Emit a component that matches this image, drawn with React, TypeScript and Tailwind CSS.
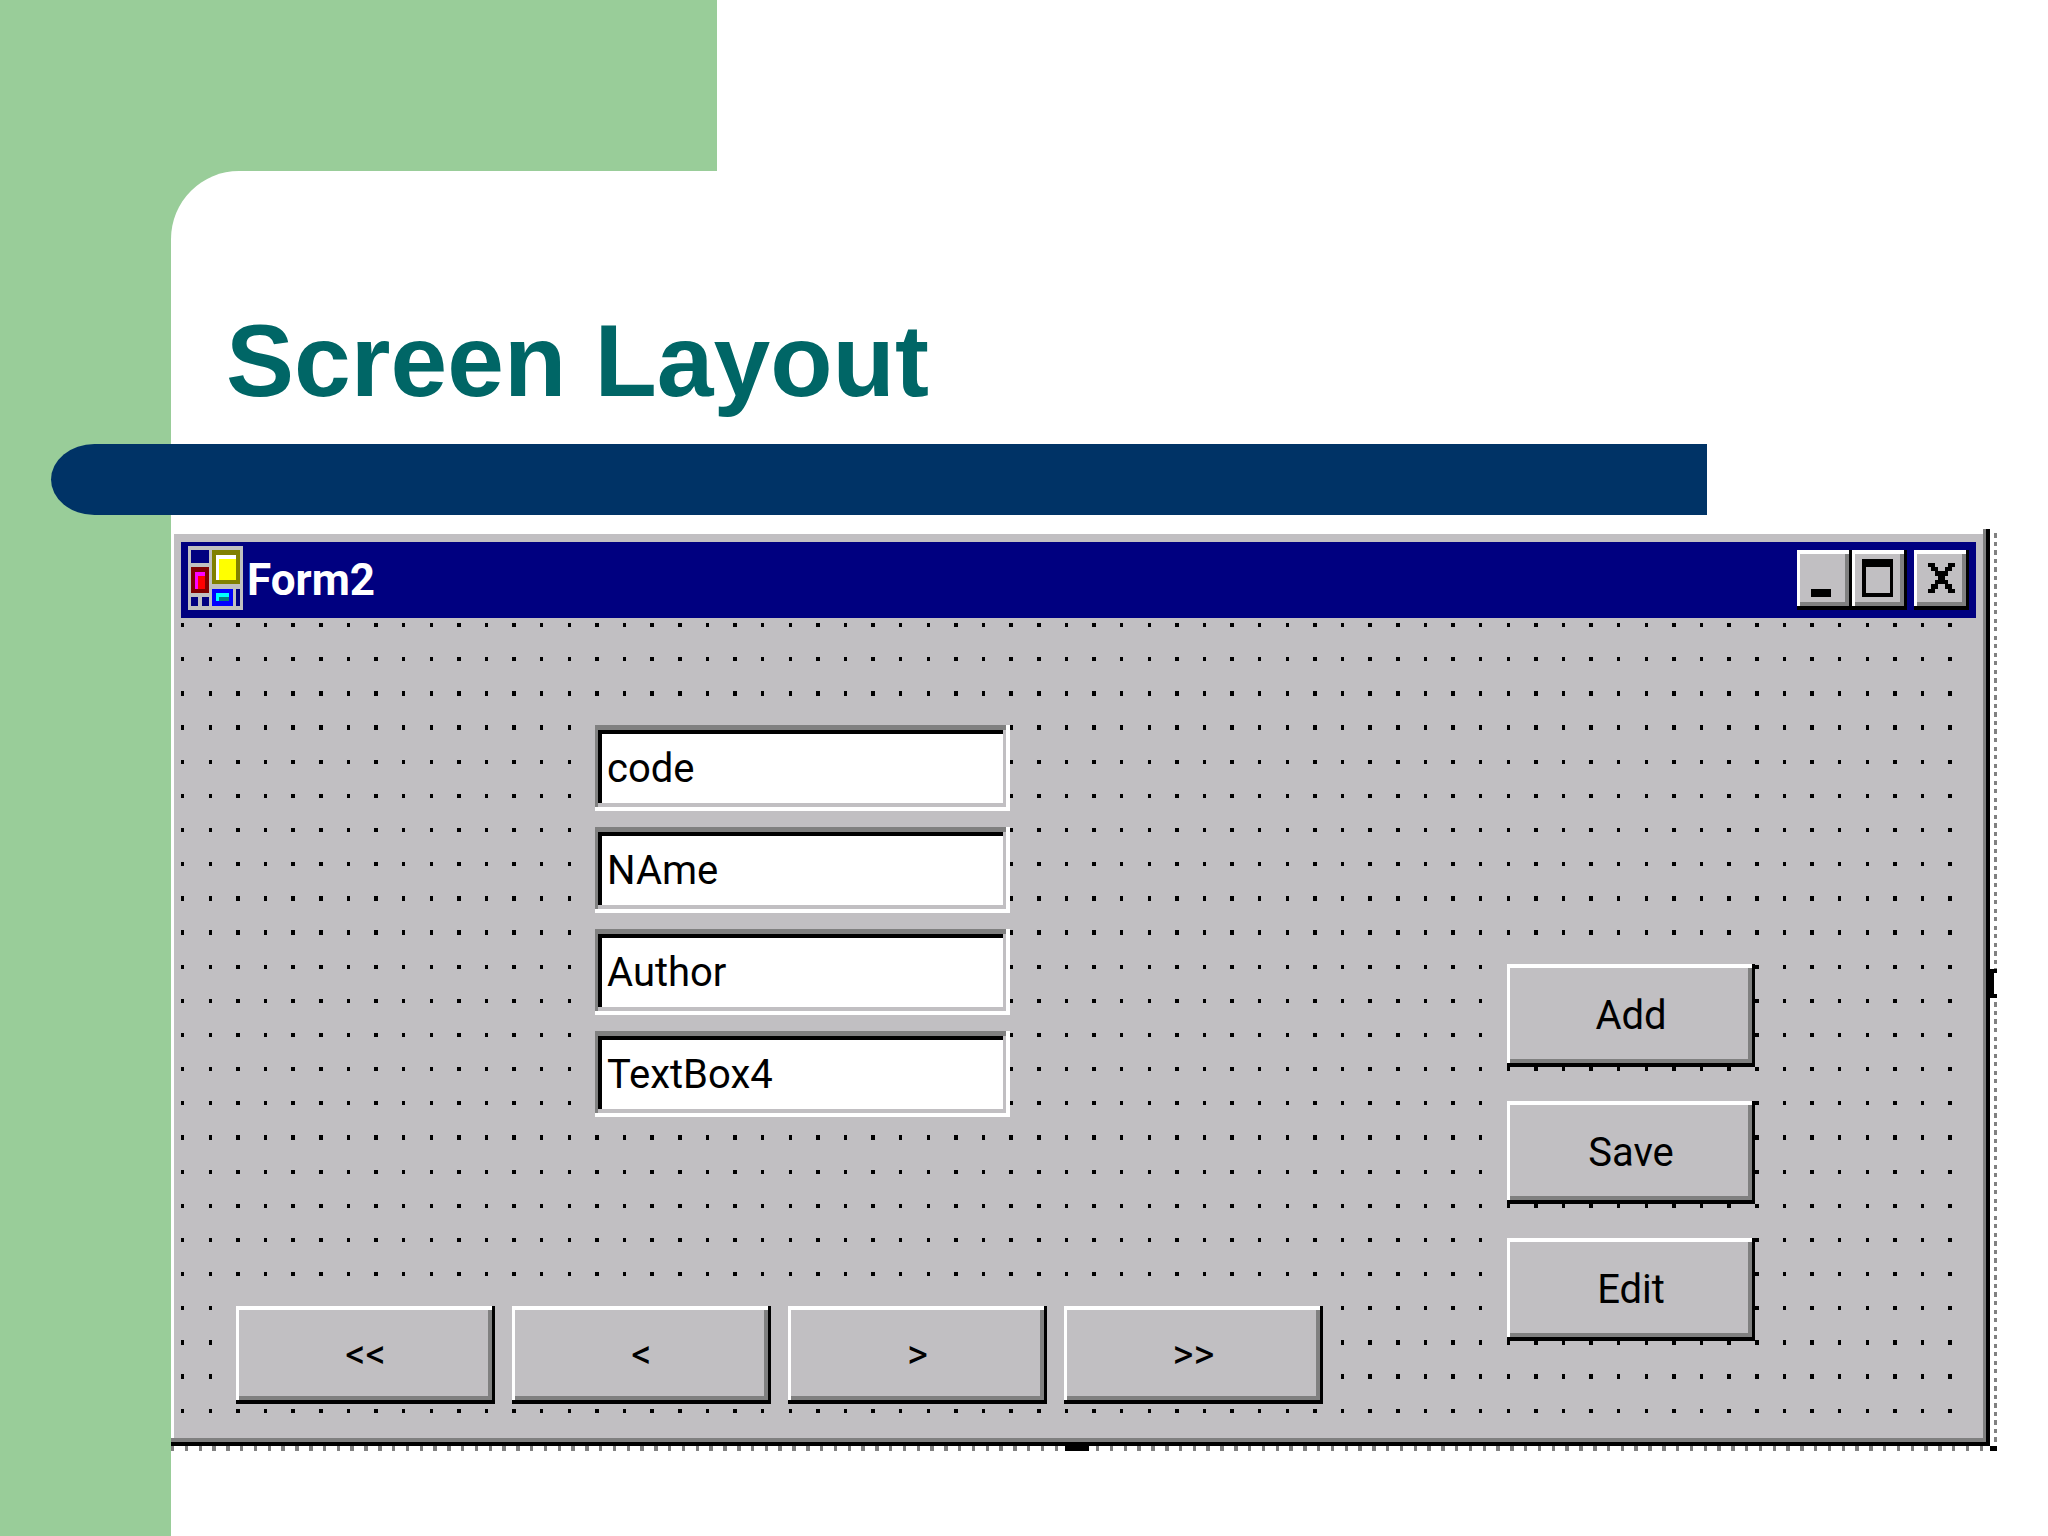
const fields = [
  { id: 'code', label: 'Code', value: 'code' },
  { id: 'name', label: 'Name', value: 'NAme' },
  { id: 'author', label: 'Author', value: 'Author' },
  { id: 'textbox4', label: 'TextBox4', value: 'TextBox4' },
];

const navigation = [
  { label: '<<', title: 'First record' },
  { label: '<', title: 'Previous record' },
  { label: '>', title: 'Next record' },
  { label: '>>', title: 'Last record' },
];

const actions = ['Add', 'Save', 'Edit'];

const raised = 'bg-[#c1bfc2] shadow-[inset_-3px_-4px_0_#000,inset_3px_4px_0_#fff,inset_-7px_-8px_0_#808080]';
const sunken =
  'bg-white shadow-[inset_-4px_-4px_0_#fff,inset_3px_5px_0_#808080,inset_-7px_-8px_0_#c1bfc2,inset_7px_9px_0_#000]';

function FormIcon() {
  return (
    <svg
      viewBox="0 0 16 15"
      preserveAspectRatio="none"
      shapeRendering="crispEdges"
      className="mt-1 h-16 w-[55px] shrink-0 self-start"
    >
      <rect width="16" height="15" fill="#c0c0c0" />
      <path d="M1 1h5v3h-5zM1 12h2v2h-2zM4 12h2v2h-2zM14 10h1v4h-1z" fill="#000080" />
      <rect x="1" y="5" width="5" height="6" fill="#800000" />
      <rect x="2" y="6" width="3" height="4" fill="#ff00ff" />
      <rect x="3" y="7" width="2" height="3" fill="#ff0000" />
      <rect x="7" y="1" width="8" height="8" fill="#808000" />
      <rect x="8" y="2" width="6" height="6" fill="#ffffff" />
      <rect x="9" y="3" width="5" height="5" fill="#ffff00" />
      <rect x="7" y="10" width="6" height="4" fill="#0000ff" />
      <rect x="8" y="11" width="4" height="2" fill="#00ffff" />
      <rect x="9" y="12" width="3" height="1" fill="#008080" />
    </svg>
  );
}

function CaptionButton({ label, path }: { label: string; path: string }) {
  return (
    <button type="button" aria-label={label} className={`h-[60px] w-[55px] ${raised}`}>
      <svg viewBox="0 0 16 14" preserveAspectRatio="none" shapeRendering="crispEdges" className="h-full w-full">
        <path d={path} fill="#000" fillRule="evenodd" />
      </svg>
    </button>
  );
}

function TitleBar() {
  return (
    <div className="flex h-[76px] items-center bg-[#000080] px-[7px]">
      <FormIcon />
      <h2 className="ml-1 flex-1 text-[44px] leading-[64px] font-bold text-white">Form2</h2>
      <CaptionButton label="Minimize" path="M4 9h6v2h-6z" />
      <CaptionButton label="Maximize" path="M3 2h9v9h-9zM4 4v6h7v-6z" />
      <div className="ml-[7px] flex">
        <CaptionButton
          label="Close"
          path="M4 3h2v1h1v1h2v-1h1v-1h2v1h-1v1h-1v1h-1v1h1v1h1v1h1v1h-2v-1h-1v-1h-2v1h-1v1h-2v-1h1v-1h1v-1h1v-1h-1v-1h-1v-1h-1z"
        />
      </div>
    </div>
  );
}

// Snap grid: one dot every 8 units
function DesignGrid() {
  const rows = Array.from({ length: 24 }, (_, i) => i * 8);
  return (
    <svg
      viewBox="0 0 520 189"
      preserveAspectRatio="none"
      shapeRendering="crispEdges"
      className="absolute inset-0 h-full w-full"
    >
      {rows.map((y) => (
        <line key={y} x1="0" x2="514" y1={y + 0.5} y2={y + 0.5} stroke="#000" strokeDasharray="1 7" />
      ))}
    </svg>
  );
}

function DesignerForm() {
  return (
    <div className="bg-[#c1bfc2] pt-[13px] pr-[14px] pb-4 pl-[10px] font-['Roboto','Liberation_Sans',sans-serif] shadow-[inset_-4px_-4px_0_#000,inset_-7px_-8px_0_#808080,inset_3px_5px_0_#fff]">
      <TitleBar />
      <form className="relative mt-[5px] flex min-h-[807px] text-[40px] leading-[52px] text-black">
        <DesignGrid />
        <div className="relative flex-1 pt-[102px]">
          <div className="ml-[414px] flex w-[415px] flex-col gap-4">
            {fields.map((field) => (
              <input
                key={field.id}
                id={field.id}
                aria-label={field.label}
                defaultValue={field.value}
                className={`h-[86px] w-full px-3 outline-none ${sunken}`}
              />
            ))}
          </div>
          <div className="mt-[189px] ml-[55px] flex gap-[17px]">
            {navigation.map((item) => (
              <button key={item.label} type="button" title={item.title} className={`h-[98px] w-[259px] ${raised}`}>
                {item.label}
              </button>
            ))}
          </div>
        </div>
        <div className="relative mr-[221px] flex w-[248px] flex-col gap-[34px] pt-[341px]">
          {actions.map((action) => (
            <button key={action} type="button" className={`h-[103px] ${raised}`}>
              {action}
            </button>
          ))}
        </div>
      </form>
    </div>
  );
}

export default function App() {
  return (
    <div className="flex min-h-screen flex-col bg-[#99cd99]">
      <div className="flex h-[171px]">
        <div className="w-[35%]" />
        <div className="flex-1 bg-white" />
      </div>
      <main className="ml-[171px] flex-1 rounded-tl-[68px] bg-white pt-[130px]">
        <h1 className="ml-[55px] font-['Liberation_Sans',sans-serif] text-[102px] leading-[120px] font-bold text-[#006666]">
          Screen Layout
        </h1>
        <div className="mt-[23px] mr-[341px] -ml-[120px] h-[71px] bg-[#003366] [border-radius:44px_0_0_44px/36px_0_0_36px]" />

        {/* Selected form with its dotted frame and resize handles */}
        <div className="mt-[14px] mr-[51px] grid grid-cols-[1fr_7px] grid-rows-[auto_5px]">
          <DesignerForm />
          <div className="relative">
            <svg
              viewBox="0 0 2 215"
              preserveAspectRatio="none"
              shapeRendering="crispEdges"
              className="absolute inset-0 h-full w-full"
            >
              <line x1="1.5" x2="1.5" y1="1" y2="215" stroke="#808080" strokeDasharray="1 1" />
            </svg>
            <div className="absolute top-[48%] left-0 h-[29px] w-full border-y-4 border-l-4 border-black bg-white" />
          </div>
          <div className="relative">
            <svg
              viewBox="0 0 527 1"
              preserveAspectRatio="none"
              shapeRendering="crispEdges"
              className="absolute inset-0 h-full w-full"
            >
              <line x1="0" x2="527" y1="0.5" y2="0.5" stroke="#808080" strokeDasharray="1 3" />
            </svg>
            <div className="absolute left-[894px] h-full w-6 bg-black" />
          </div>
          <div className="bg-black" />
        </div>
      </main>
    </div>
  );
}
